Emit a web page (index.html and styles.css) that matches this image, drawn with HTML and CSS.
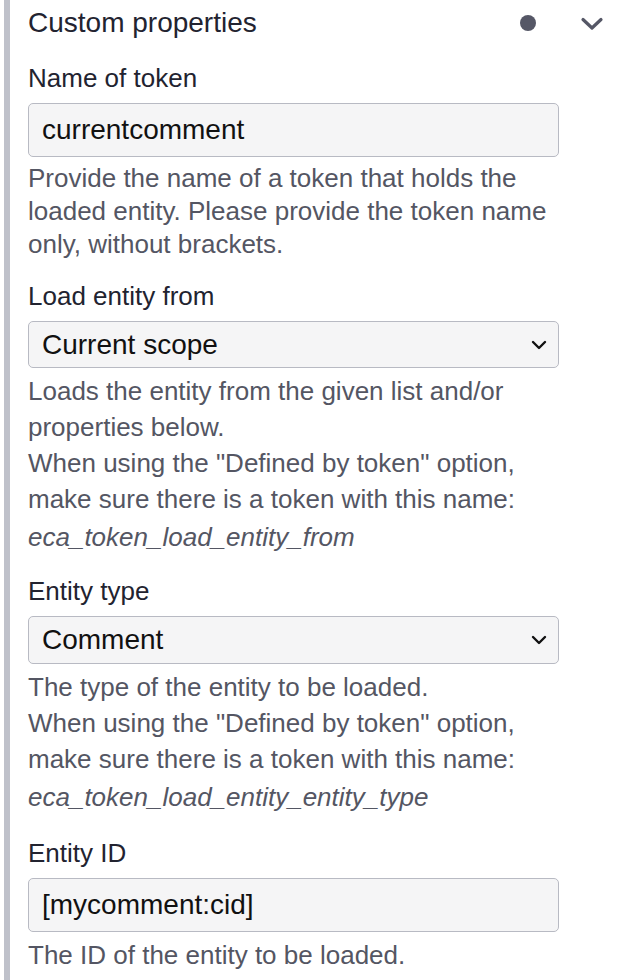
FILE: index.html
```html
<!DOCTYPE html>
<html lang="en">
<head>
<meta charset="utf-8">
<title>Custom properties</title>
<link rel="stylesheet" href="styles.css">
</head>
<body>
<div class="panel">
  <div class="panel-header">
    <span class="panel-title">Custom properties</span>
    <span class="panel-actions">
      <span class="status-dot"></span>
      <svg class="toggle" width="24" height="14" viewBox="0 0 24 14" aria-hidden="true"><path d="M3 2.5 L12 11 L21 2.5" fill="none" stroke="#555766" stroke-width="3.2" stroke-linecap="round" stroke-linejoin="round"/></svg>
    </span>
  </div>

  <div class="field">
    <div class="label">Name of token</div>
    <input class="text-input" type="text" value="currentcomment" readonly>
    <div class="desc desc-tight">Provide the name of a token that holds the loaded entity. Please provide the token name only, without brackets.</div>
  </div>

  <div class="field">
    <div class="label">Load entity from</div>
    <div class="select"><span>Current scope</span><svg width="16" height="10" viewBox="0 0 16 10" aria-hidden="true"><path d="M2 2 L8 8 L14 2" fill="none" stroke="#111" stroke-width="2.4" stroke-linecap="round" stroke-linejoin="round"/></svg></div>
    <div class="desc">Loads the entity from the given list and/or properties below.<br>When using the "Defined by token" option, make sure there is a token with this name: <em>eca_token_load_entity_from</em></div>
  </div>

  <div class="field field-wide">
    <div class="label">Entity type</div>
    <div class="select select-tall"><span>Comment</span><svg width="16" height="10" viewBox="0 0 16 10" aria-hidden="true"><path d="M2 2 L8 8 L14 2" fill="none" stroke="#111" stroke-width="2.4" stroke-linecap="round" stroke-linejoin="round"/></svg></div>
    <div class="desc">The type of the entity to be loaded.<br>When using the "Defined by token" option, make sure there is a token with this name: <em>eca_token_load_entity_entity_type</em></div>
  </div>

  <div class="field field-wider">
    <div class="label">Entity ID</div>
    <input class="text-input" type="text" value="[mycomment:cid]" readonly>
    <div class="desc">The ID of the entity to be loaded.</div>
  </div>
</div>
</body>
</html>
```

FILE: styles.css
```css
html, body {
  margin: 0;
  padding: 0;
  background: #ffffff;
}

body {
  font-family: "Liberation Sans", Arial, Helvetica, sans-serif;
  color: #222330;
  height: 980px;
  overflow: hidden;
}

.panel {
  margin-left: 4px;
  border-left: 6px solid #bfc1ca;
  padding-left: 18px;
  padding-right: 0;
  min-height: 980px;
  box-sizing: border-box;
}

.panel-header {
  display: flex;
  align-items: center;
  justify-content: space-between;
  padding-top: 6px;
  height: 34px;
}

.panel-title {
  font-size: 28px;
  line-height: 34px;
  color: #222330;
}

.panel-actions {
  display: flex;
  align-items: center;
  gap: 44px;
  padding-right: 14px;
}

.status-dot {
  width: 16px;
  height: 16px;
  border-radius: 50%;
  background: #555766;
}

.toggle {
  display: block;
  margin-top: 2px;
}

.field {
  width: 531px;
  margin-top: 18px;
}

.panel-header + .field {
  margin-top: 21px;
}

.field-wide {
  margin-top: 17px;
}

.field-wider {
  margin-top: 19px;
}

.label {
  font-size: 26px;
  line-height: 34px;
  color: #222330;
  margin-bottom: 8px;
}

.text-input {
  display: block;
  box-sizing: border-box;
  width: 531px;
  height: 54px;
  margin: 0;
  padding: 0 13px;
  font-family: "Liberation Sans", Arial, sans-serif;
  font-size: 28px;
  color: #111111;
  background: #f5f5f6;
  border: 1.5px solid #b8bac3;
  border-radius: 5px;
  outline: none;
}

.select {
  display: flex;
  align-items: center;
  justify-content: space-between;
  box-sizing: border-box;
  width: 531px;
  height: 47px;
  padding: 0 11px 0 13px;
  font-size: 28px;
  color: #111111;
  background: #f5f5f6;
  border: 1.5px solid #b8bac3;
  border-radius: 5px;
}

.select-tall {
  height: 48px;
}

.select svg {
  display: block;
}

.desc {
  margin-top: 5px;
  font-size: 26px;
  line-height: 36px;
  color: #545663;
}

.desc-tight {
  line-height: 33px;
}

.desc em {
  font-style: italic;
  line-height: 40px;
}
```
